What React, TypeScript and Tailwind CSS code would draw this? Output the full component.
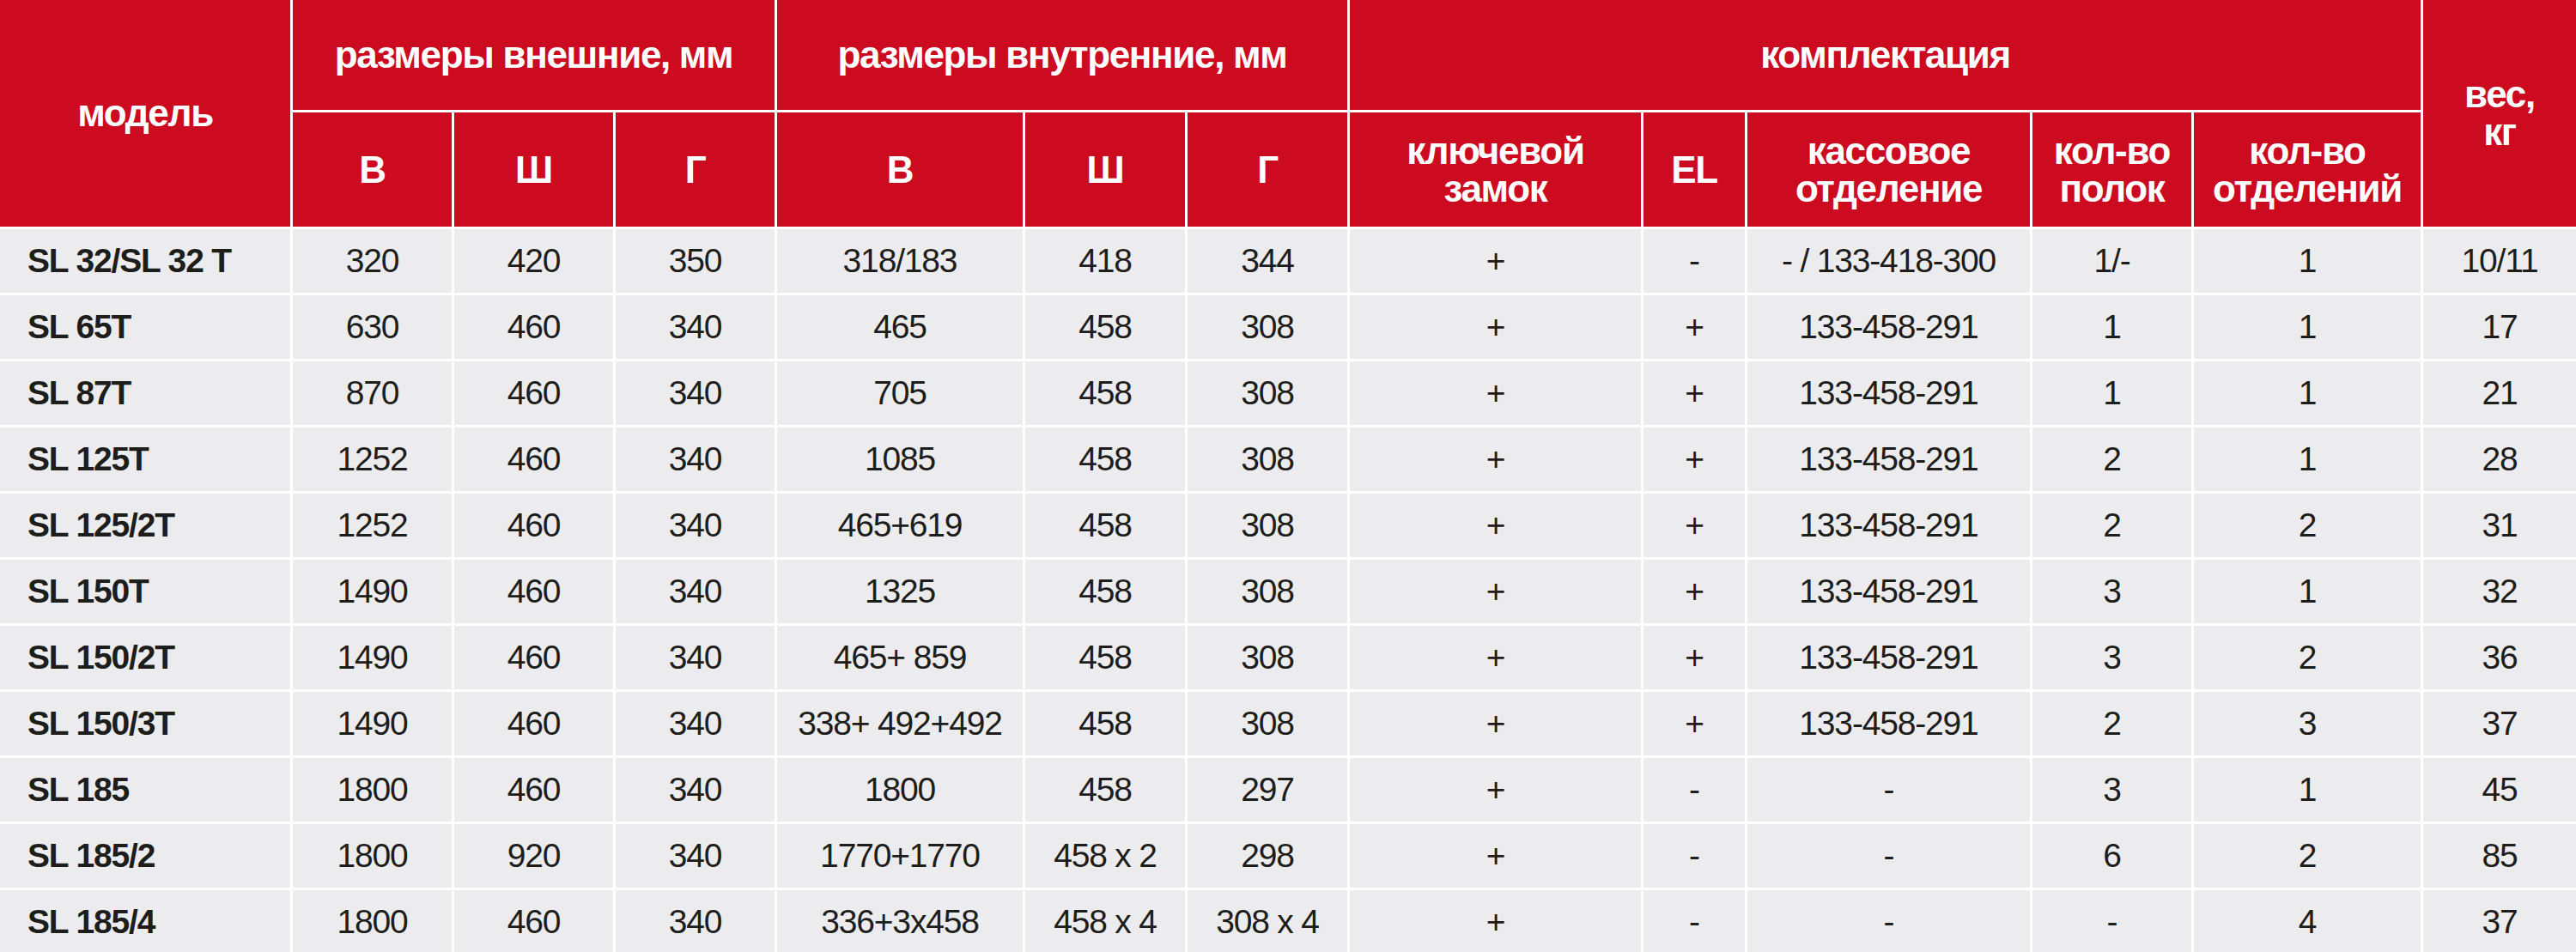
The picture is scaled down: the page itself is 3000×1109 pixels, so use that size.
import React from "react"

type Row = string[]

const rows: Row[] = [
    ["SL 32/SL 32 T", "320", "420", "350", "318/183", "418", "344", "+", "-", "- / 133-418-300", "1/-", "1", "10/11"],
    ["SL 65T", "630", "460", "340", "465", "458", "308", "+", "+", "133-458-291", "1", "1", "17"],
    ["SL 87T", "870", "460", "340", "705", "458", "308", "+", "+", "133-458-291", "1", "1", "21"],
    ["SL 125T", "1252", "460", "340", "1085", "458", "308", "+", "+", "133-458-291", "2", "1", "28"],
    ["SL 125/2T", "1252", "460", "340", "465+619", "458", "308", "+", "+", "133-458-291", "2", "2", "31"],
    ["SL 150T", "1490", "460", "340", "1325", "458", "308", "+", "+", "133-458-291", "3", "1", "32"],
    ["SL 150/2T", "1490", "460", "340", "465+ 859", "458", "308", "+", "+", "133-458-291", "3", "2", "36"],
    ["SL 150/3T", "1490", "460", "340", "338+ 492+492", "458", "308", "+", "+", "133-458-291", "2", "3", "37"],
    ["SL 185", "1800", "460", "340", "1800", "458", "297", "+", "-", "-", "3", "1", "45"],
    ["SL 185/2", "1800", "920", "340", "1770+1770", "458 x 2", "298", "+", "-", "-", "6", "2", "85"],
    ["SL 185/4", "1800", "460", "340", "336+3x458", "458 x 4", "308 x 4", "+", "-", "-", "-", "4", "37"],
]

const Head = ({children, className = ""}: {children: React.ReactNode; className?: string}) => (
    <div className={`flex items-center justify-center bg-[#cc0a20] text-center text-[44px] font-bold leading-[1] tracking-[-0.03em] text-white ${className}`}>
        {children}
    </div>
)

export default function App() {
    return (
        <main className="min-h-screen bg-white font-['Liberation_Sans',Arial,sans-serif]">
            <div className="grid grid-cols-[338px_185px_185px_185px_286px_186px_186px_339px_118px_329px_185px_264px_1fr] grid-rows-[128px_133px_repeat(11,74px)] gap-[3px] bg-white">
                <Head className="row-span-2">модель</Head>
                <Head className="col-span-3">размеры внешние, мм</Head>
                <Head className="col-span-3">размеры внутренние, мм</Head>
                <Head className="col-span-5">комплектация</Head>
                <Head className="row-span-2">вес,<br/>кг</Head>

                <Head>В</Head>
                <Head>Ш</Head>
                <Head>Г</Head>
                <Head>В</Head>
                <Head>Ш</Head>
                <Head>Г</Head>
                <Head>ключевой<br/>замок</Head>
                <Head>EL</Head>
                <Head>кассовое<br/>отделение</Head>
                <Head>кол-во<br/>полок</Head>
                <Head>кол-во<br/>отделений</Head>

                {rows.map((row, i) =>
                    row.map((cell, j) => (
                        <div
                            key={`${i}-${j}`}
                            className={
                                j === 0
                                    ? "flex items-center bg-[#ececee] pl-8 text-[39px] font-bold tracking-[-0.03em] text-[#1d1d1b]"
                                    : "flex items-center justify-center bg-[#ececee] text-[39px] tracking-[-0.03em] text-[#1d1d1b]"
                            }
                        >
                            {cell}
                        </div>
                    ))
                )}
            </div>
        </main>
    )
}
